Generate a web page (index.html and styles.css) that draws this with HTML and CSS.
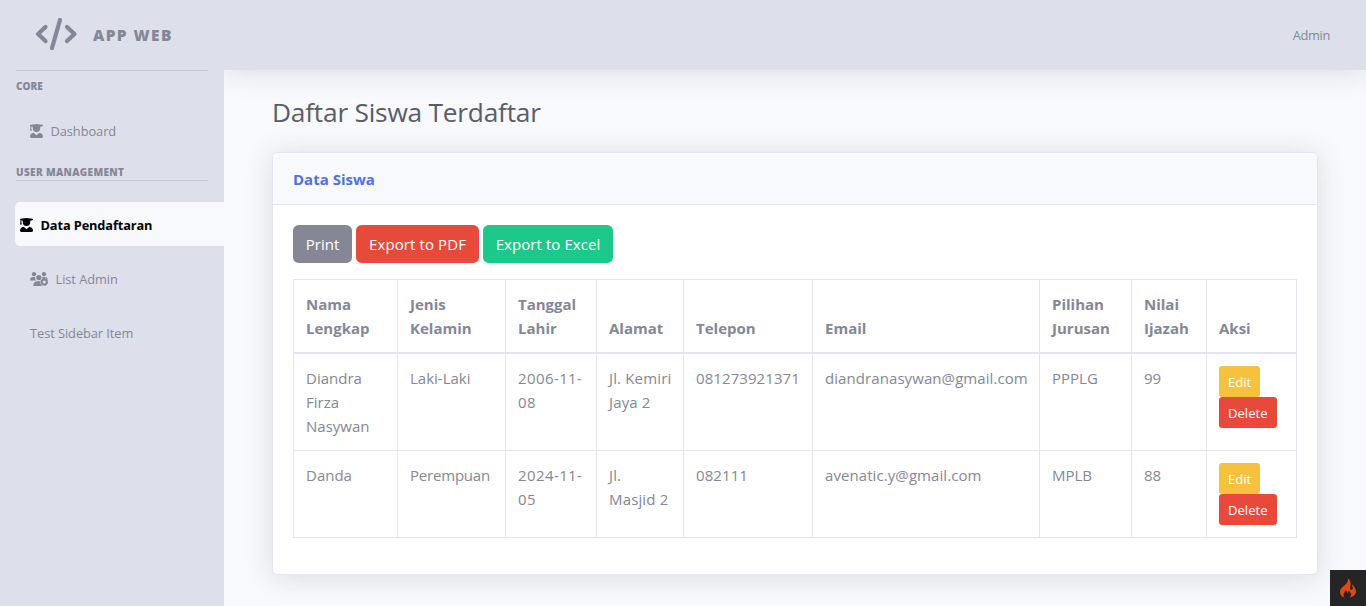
FILE: index.html
```html
<!DOCTYPE html>
<html lang="id">
<head>
<meta charset="utf-8">
<title>Daftar Siswa Terdaftar</title>
<link rel="stylesheet" href="styles.css">
</head>
<body>
<svg class="defs" width="0" height="0">
  <symbol id="graduate" viewBox="0 0 13 14"><path d="M6.500 0 .5.800C-.1 1-.1 1.900.4 2.100V4.300L0 6.600H1.900L1.400 4.300V2.500L2.800 2.800V4.300a3.700 3.700 0 0 0 7.400 0V2.800l2.300-.6c.7-.2.700-1.200 0-1.400zM3.600 8.700C1.500 9 0 10.500 0 12.600 0 13.400.500 14 1.300 14H11.700c.8 0 1.300-.6 1.300-1.400 0-2.100-1.500-3.600-3.600-3.900L6.500 11.300z"/></symbol>
</svg>
<div class="app">
  <aside class="sidebar">
    <a class="brand">
      <svg class="brand-icon" viewBox="0 0 40 32" fill="none" stroke="currentColor" stroke-width="4.200" stroke-linecap="round" stroke-linejoin="round"><path d="M9.500 9 2 16 9.500 23M31 9l7.500 7L31 23M24 2l-8 28"/></svg>
      <span class="brand-text">APP WEB</span>
    </a>
    <hr class="divider">
    <div class="heading heading-core">CORE</div>
    <a class="nav-link"><svg class="icon" fill="currentColor"><use href="#graduate"/></svg><span>Dashboard</span></a>
    <div class="heading heading-user">USER MANAGEMENT</div>
    <hr class="divider">
    <a class="nav-link managed active"><svg class="icon" fill="currentColor"><use href="#graduate"/></svg><span>Data Pendaftaran</span></a>
    <a class="nav-link managed"><svg class="icon icon-users" viewBox="0 0 18 14" fill="currentColor"><circle cx="4" cy="2.2" r="2.1"/><circle cx="14" cy="2.2" r="2.1"/><circle cx="8.8" cy="5.6" r="2.6"/><path d="M0 8.4C0 6.2 1.3 5 3.2 5h1.9c-.3 1.3.1 2.6 1 3.4zM12.3 5h2.3c1.8 0 3 .8 3.2 2.4l-2.1-1-3.5.4zM3.3 14c0-3 1.6-4.8 4-4.800h3c-.1 1.800.4 3.400 1.600 4.800z"/><circle cx="14.300" cy="10" r="2.500" fill="none" stroke="currentColor" stroke-width="1.900"/><circle cx="14.300" cy="10" r="3.500" fill="none" stroke="currentColor" stroke-width="1" stroke-dasharray="1.700 1.970"/></svg><span>List Admin</span></a>
    <a class="nav-link managed"><span>Test Sidebar Item</span></a>
  </aside>
  <div class="content">
    <nav class="topbar"><span>Admin</span></nav>
    <main class="main">
      <h1 class="title">Daftar Siswa Terdaftar</h1>
      <section class="card">
        <h6 class="card-header">Data Siswa</h6>
        <div class="card-body">
          <div class="actions">
            <a class="btn gray b-print">Print</a>
            <a class="btn red b-pdf">Export to PDF</a>
            <a class="btn green b-excel">Export to Excel</a>
          </div>
          <table class="table">
            <colgroup><col class="c1"><col class="c2"><col class="c3"><col class="c4"><col class="c5"><col class="c6"><col class="c7"><col class="c8"><col class="c9"></colgroup>
            <thead><tr><th>Nama<br>Lengkap</th><th>Jenis<br>Kelamin</th><th>Tanggal<br>Lahir</th><th>Alamat</th><th>Telepon</th><th>Email</th><th>Pilihan<br>Jurusan</th><th>Nilai<br>Ijazah</th><th>Aksi</th></tr></thead>
            <tbody>
              <tr><td>Diandra<br>Firza<br>Nasywan</td><td>Laki-Laki</td><td class="date">2006-11-<br>08</td><td class="address">Jl. Kemiri<br>Jaya 2</td><td class="phone">081273921371</td><td class="mail">diandranasywan@gmail.com</td><td>PPPLG</td><td>99</td><td><div class="row-actions"><a class="btn-sm yellow">Edit</a><a class="btn-sm red">Delete</a></div></td></tr>
              <tr><td>Danda</td><td class="gender">Perempuan</td><td class="date">2024-11-<br>05</td><td class="address">Jl.<br>Masjid 2</td><td class="phone">082111</td><td class="mail">avenatic.y@gmail.com</td><td>MPLB</td><td>88</td><td><div class="row-actions"><a class="btn-sm yellow">Edit</a><a class="btn-sm red">Delete</a></div></td></tr>
            </tbody>
          </table>
        </div>
      </section>
    </main>
  </div>
</div>
<div class="debug"><svg width="16" height="20" viewBox="0 0 16 20"><path fill="#dd4814" d="M7.500 0c1 2.200.3 4-1.500 5.900C3.700 8.200 0 10.200 0 14c0 2.700 1.700 4.700 4.700 5.700-1.300-1.500-1.500-3.100-.5-4.700.6-1 1.300-1.600 1.200-2.800 1.300.6 1.800 1.500 1.700 2.700 1.100-.3 1.500-1.200 1.300-2.200 2 1.200 3.100 2.900 2.600 4.700-.3.900-.8 1.600-1.600 2.300 3.800-1 6.500-3 6.600-6.200.1-3.200-2.500-4.700-3.400-7.200-.7 1.100-.5 2.200 0 3.300.5 1.300-.2 2.200-1.200 2.200-1.200 0-1.600-1.100-1.200-2.700.9-3.600.6-7.200-2.700-9.100z"/></svg></div>
</body>
</html>
```
FILE: styles.css
```css
* { box-sizing: border-box; }
body { margin: 0; height: 606px; overflow: hidden; background: #f8f9fc; color: #858796; font: 15px/24px "Open Sans", "Noto Sans", sans-serif; }
.defs { display: none; }
.app { display: flex; height: 606px; }
.sidebar { width: 224px; flex: none; background: #dddfeb; z-index: 2; display: flex; flex-direction: column; }
.brand { height: 70px; padding-left: 36px; display: flex; align-items: center; gap: 17px; }
.brand-icon { width: 40px; height: 32px; margin-top: -2px; overflow: visible; }
.brand-text { font-size: 15.5px; font-weight: 800; letter-spacing: 1.4px; }
.divider { margin: 0 16px; border: 0; border-top: 1px solid #c6c8d5; width: 192px; flex: none; }
.heading { padding-left: 16px; font-size: 10px; font-weight: 800; line-height: 15px; letter-spacing: 0.35px; }
.heading-core { margin: 8px 0 15px; letter-spacing: 0; }
.heading-user { margin: 12px 0 0; }
.nav-link { height: 44px; margin: 0 0 10px 15px; padding-left: 15px; display: flex; align-items: center; gap: 7.5px; font-size: 12.8px; line-height: 20px; letter-spacing: -0.05px; }
.managed { padding-top: 2px; }
.heading-core + .nav-link { margin-bottom: 0; }
.heading-user + .divider + .nav-link { margin-top: 21px; }
.active { background: #f8f9fc; color: #000; font-weight: 700; padding-left: 5px; border-radius: 5px 0 0 5px; letter-spacing: -0.12px; }
.icon { width: 13px; height: 14px; flex: none; }
.icon-users { width: 18px; }
.content { flex: 1; display: flex; flex-direction: column; }
.topbar { height: 70px; flex: none; background: #dddfeb; box-shadow: 0 2.4px 28px rgba(58, 59, 69, .15); display: flex; align-items: center; justify-content: flex-end; padding-right: 36px; font-size: 12.8px; letter-spacing: -0.3px; }
.main { padding: 24px 48px 0; }
.title { margin: 0 0 24px; font-size: 26.3px; font-weight: 400; line-height: 36px; height: 34px; color: #5a5c69; letter-spacing: -0.23px; }
.card { width: 1046px; height: 423px; background: #fff; border: 1px solid #e3e6f0; border-radius: 5.6px; box-shadow: 0 2.4px 28px rgba(58, 59, 69, .15); overflow: hidden; }
.card-header { margin: 0; height: 52px; padding: 0 20px; display: flex; align-items: center; background: #f8f9fc; border-bottom: 1px solid #e3e6f0; color: #4e73df; font-size: 15px; font-weight: 700; }
.card-body { padding: 20px; }
.actions { display: flex; gap: 4px; margin-bottom: 16px; }
.btn { height: 38px; display: flex; align-items: center; justify-content: center; color: #fff; border-radius: 5.6px; }
.gray { background: #858796; }
.red { background: #e74a3b; }
.green { background: #1cc88a; }
.yellow { background: #f6c23e; }
.b-print { width: 59px; }
.b-pdf { width: 123px; letter-spacing: 0.1px; }
.b-excel { width: 130px; letter-spacing: 0.07px; }
.table { width: 1004px; table-layout: fixed; border-collapse: collapse; }
.table th, .table td { border: 1px solid #e3e6f0; padding: 12px; text-align: left; vertical-align: top; white-space: nowrap; }
.table thead th { vertical-align: bottom; border-bottom-width: 2px; }
.table th { font-weight: 700; }
.table .date { letter-spacing: 0.4px; }
.table .address { letter-spacing: 0.15px; }
.table .phone, .table .mail { letter-spacing: 0.08px; }
.table .gender { letter-spacing: -0.2px; }
.c1 { width: 104px; } .c2 { width: 108px; } .c3 { width: 91px; } .c4 { width: 87px; } .c5 { width: 129px; } .c6 { width: 227px; } .c7 { width: 92px; } .c8 { width: 75px; } .c9 { width: 90px; }
.row-actions { display: flex; flex-direction: column; align-items: flex-start; }
.btn-sm { height: 31px; padding: 0 9px; display: flex; align-items: center; color: #fff; font-size: 13.1px; border-radius: 3.2px; }
.debug { position: absolute; right: 0; bottom: 0; width: 36px; height: 36px; background: #252525; display: flex; align-items: center; justify-content: center; }
```
